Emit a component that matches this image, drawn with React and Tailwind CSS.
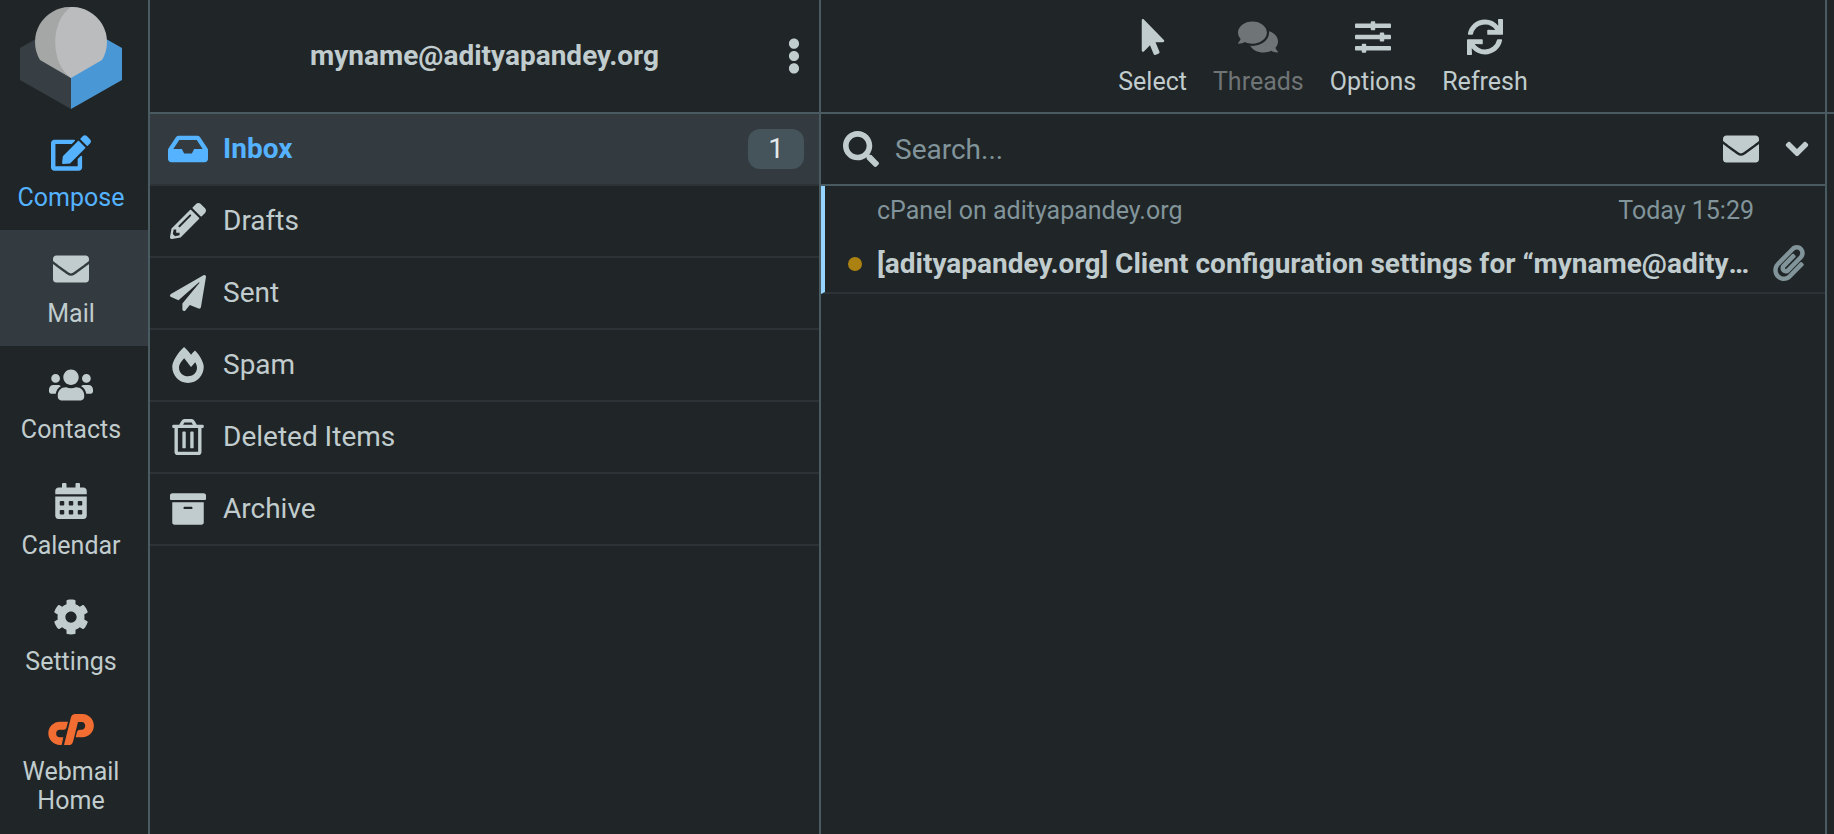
import { useState } from "react";
import {
  FaAngleDown,
  FaArchive,
  FaCalendarAlt,
  FaCog,
  FaComments,
  FaEdit,
  FaEllipsisV,
  FaEnvelope,
  FaFireAlt,
  FaInbox,
  FaMousePointer,
  FaPaperclip,
  FaPaperPlane,
  FaPencilAlt,
  FaRegTrashAlt,
  FaSearch,
  FaSlidersH,
  FaSync,
  FaUsers,
} from "react-icons/fa";

const folders = [
  { name: "Inbox", icon: FaInbox, size: "h-9 w-10", unread: 1 },
  { name: "Drafts", icon: FaPencilAlt, size: "h-9 w-9" },
  { name: "Sent", icon: FaPaperPlane, size: "h-9 w-9" },
  { name: "Spam", icon: FaFireAlt, size: "h-9 w-9" },
  { name: "Deleted Items", icon: FaRegTrashAlt, size: "h-9 w-9" },
  { name: "Archive", icon: FaArchive, size: "h-9 w-9" },
];

const tasks = [
  { name: "Mail", icon: FaEnvelope, size: "h-9 w-9" },
  { name: "Contacts", icon: FaUsers, size: "h-9 w-11" },
  { name: "Calendar", icon: FaCalendarAlt, size: "h-9 w-9" },
  { name: "Settings", icon: FaCog, size: "h-9 w-9" },
];

const tools = [
  { name: "Select", icon: FaMousePointer, size: "h-9 w-9" },
  { name: "Threads", icon: FaComments, size: "h-9 w-10", disabled: true },
  { name: "Options", icon: FaSlidersH, size: "h-9 w-9" },
  { name: "Refresh", icon: FaSync, size: "h-9 w-9" },
];

const Logo = () => (
  <svg viewBox="0 0 102 102" className="h-[102px] w-[102px]" aria-hidden="true">
    <path d="M0 41 L51 12 V102 L0 73 Z" fill="#373f45" />
    <path d="M102 41 L51 12 V102 L102 73 Z" fill="#4a97d5" />
    <path d="M51 0 A35 35 0 0 0 20 53 L51 71 Z" fill="#a5a7a6" />
    <path d="M51 0 C30 14 30 56 51 71 L82 53 A35 35 0 0 0 51 0 Z" fill="#bbbcbe" />
  </svg>
);

const CpanelIcon = () => (
  <svg viewBox="0 0 138 93" className="h-[31px] w-[46px]" fill="#f26d31" aria-hidden="true">
    <path d="M60 23 H36 A35 35 0 0 0 36 93 H41 L46 70 H36 A11 11 0 0 1 36 47 H48 Q53 47 55 42 Z" />
    <path d="M48 93 L69 10 Q72 0 82 0 H102 A35 35 0 0 1 103 70 H83 L87 54 Q89 47 96 47 H103 A12 12 0 0 0 103 24 H90 L75 83 Q72 93 63 93 Z" />
  </svg>
);

const Sidebar = () => {
  const [task, setTask] = useState("Mail");

  return (
    <nav className="flex w-[150px] shrink-0 flex-col border-r-2 border-[#4a5a61]">
      <div className="flex h-[114px] shrink-0 justify-center pr-[6px] pt-[7px]">
        <Logo />
      </div>
      <button className="flex h-[116px] shrink-0 flex-col items-center gap-3 pr-[6px] pt-[21px] text-[#54b2ff]">
        <FaEdit className="h-9 w-10" />
        <span>Compose</span>
      </button>
      {tasks.map(({ name, icon: Icon, size }) => (
        <button
          key={name}
          onClick={() => setTask(name)}
          className={`flex h-[116px] shrink-0 flex-col items-center gap-3 pr-[6px] pt-[21px] ${
            task === name ? "bg-[#333b41]" : ""
          }`}
        >
          <Icon className={size} />
          <span>{name}</span>
        </button>
      ))}
      <a
        href="#webmail"
        className="flex flex-col items-center gap-3 pr-[6px] pt-5 text-center"
      >
        <CpanelIcon />
        <span>
          Webmail
          <br />
          Home
        </span>
      </a>
    </nav>
  );
};

const FolderList = () => {
  const [selected, setSelected] = useState("Inbox");

  return (
    <section className="flex w-[671px] shrink-0 flex-col border-r-2 border-[#4a5a61]">
      <header className="flex h-[114px] shrink-0 items-center border-b-2 border-[#4a5a61] pr-[18px]">
        <h1 className="flex-1 pb-0.5 pl-8 text-center text-[28px] font-bold">
          myname@adityapandey.org
        </h1>
        <button aria-label="Folder actions">
          <FaEllipsisV className="h-9 w-3.5" />
        </button>
      </header>
      <ul>
        {folders.map(({ name, icon: Icon, size, unread }) => (
          <li key={name} className="border-b-2 border-[#2c3235]">
            <button
              onClick={() => setSelected(name)}
              className={`flex h-[70px] w-full items-center pl-[18px] pr-[15px] text-[28px] ${
                selected === name ? "bg-[#333b41] font-bold text-[#54b2ff]" : ""
              }`}
            >
              <span className="flex w-10 justify-center">
                <Icon className={size} />
              </span>
              <span className="flex-1 pb-0.5 pl-[15px] text-left">{name}</span>
              {unread && (
                <span className="flex h-10 w-14 items-center justify-center rounded-xl bg-[#45535a] pb-0.5 font-normal text-[#e3e9ea]">
                  {unread}
                </span>
              )}
            </button>
          </li>
        ))}
      </ul>
    </section>
  );
};

const MessageList = () => {
  const [query, setQuery] = useState("");

  return (
    <section className="flex min-w-0 flex-1 flex-col border-r-2 border-[#4a5a61]">
      <header className="flex h-[114px] shrink-0 justify-center gap-[26px] border-b-2 border-[#4a5a61] pt-[19px]">
        {tools.map(({ name, icon: Icon, size, disabled }) => (
          <button
            key={name}
            disabled={disabled}
            className="flex flex-col items-center gap-3 disabled:text-[#6f7476]"
          >
            <Icon className={size} />
            <span>{name}</span>
          </button>
        ))}
      </header>
      <form
        onSubmit={(e) => e.preventDefault()}
        className="flex h-[72px] shrink-0 items-center border-b-2 border-[#4a5a61] pl-[22px] pr-4"
      >
        <label htmlFor="search" aria-label="Search">
          <FaSearch className="h-9 w-9" />
        </label>
        <input
          id="search"
          type="text"
          value={query}
          onChange={(e) => setQuery(e.target.value)}
          placeholder="Search..."
          className="min-w-0 flex-1 bg-transparent pl-4 text-[28px] outline-none placeholder:text-[#81949a]"
        />
        <button type="button" aria-label="Show unread only">
          <FaEnvelope className="h-9 w-9" />
        </button>
        <button type="button" aria-label="Search options" className="pl-[26px]">
          <FaAngleDown className="h-9 w-6" />
        </button>
      </form>
      <ul>
        <li className="flex h-[108px] border-b-2 border-l-4 border-b-[#2c3235] border-l-[#94d4ff] pr-5">
          <div className="flex w-[52px] items-end pb-[21px] pl-[23px]">
            <span className="h-3.5 w-3.5 rounded-full bg-[#ab8112]" />
          </div>
          <div className="min-w-0 flex-1">
            <div className="flex justify-between pt-[10px] text-[#81949a]">
              <span>cPanel on adityapandey.org</span>
              <time>Today 15:29</time>
            </div>
            <a
              href="#message"
              className="mt-[21px] block truncate text-[28px] leading-9 font-bold"
            >
              [adityapandey.org] Client configuration settings for “myname@adityapandey.org”.
            </a>
          </div>
          <div className="flex w-[51px] items-end justify-end pb-[11px] text-[#81949a]">
            <FaPaperclip className="h-9 w-8" />
          </div>
        </li>
      </ul>
    </section>
  );
};

const App = () => {
  return (
    <div className="flex min-h-screen bg-[#202527] font-[Roboto,sans-serif] text-[25px] leading-[29px] text-[#c0cccd]">
      <Sidebar />
      <FolderList />
      <MessageList />
      {/* Edge of the message preview pane */}
      <section className="w-[7px] shrink-0">
        <div className="h-[114px] border-b-2 border-[#4a5a61]" />
      </section>
    </div>
  );
};

export default App;
